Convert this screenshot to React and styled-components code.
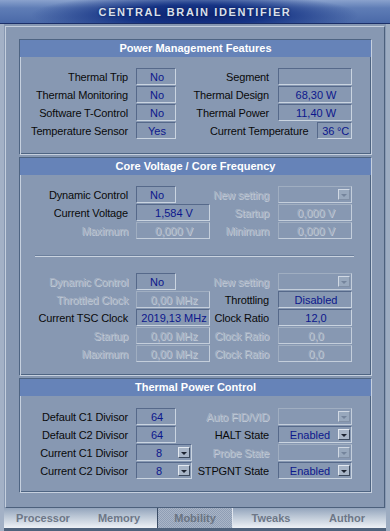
import React from "react";
import styled, { createGlobalStyle } from "styled-components";

const GlobalStyle = createGlobalStyle`
  html, body { margin: 0; padding: 0; background: #8798b2; }
  body { font-family: "Liberation Sans", Arial, sans-serif; }
  * { box-sizing: border-box; }
`;

const Window = styled.div`
  width: 390px;
  height: 531px;
  display: flex;
  flex-direction: column;
  background: #8798b2;
  overflow: hidden;
`;

const TitleBar = styled.div`
  height: 24px;
  flex: none;
  display: flex;
  align-items: center;
  justify-content: center;
  background:
    radial-gradient(ellipse 42% 95% at 50% 65%, #0c2270 0%, #163485 45%, rgba(40, 70, 150, 0) 100%),
    linear-gradient(to bottom, #8aa2cd 0%, #5f7db6 35%, #4a69a8 100%);
  border-bottom: 1px solid #1b2f68;
`;

const TitleText = styled.span`
  color: #d9e0ec;
  font-size: 11px;
  font-weight: 700;
  letter-spacing: 1.6px;
  text-shadow: 0 0 2px #0a1850;
  padding-top: 1px;
`;

const Body = styled.div`
  flex: 1;
  display: flex;
  flex-direction: column;
  border-left: 4px solid #a3b1c6;
  border-right: 4px solid #9dacc1;
`;

const FrameWrap = styled.div`
  padding: 2px 1px 0 1px;
`;

const Frame = styled.div`
  border: 1px solid;
  border-color: #c5cfdd #4c607c #4c607c #c5cfdd;
  padding: 12px 12px 14px 13px;
  display: flex;
  flex-direction: column;
  gap: 2px;
`;

const Section = styled.section`
  border: 1px solid;
  border-color: #4e6482 #c6d0de #c6d0de #4e6482;
  box-shadow: inset 1px 1px 0 #c6d0de, inset -1px -1px 0 #4e6482;
`;

const SectionHeader = styled.div`
  height: 17px;
  line-height: 17px;
  background: #6683b8;
  color: #ffffff;
  font-size: 11px;
  font-weight: 700;
  text-align: center;
`;

const SectionBody = styled.div`
  padding: ${(p) => p.$pt}px 0 ${(p) => p.$pb}px;
`;

const Grid = styled.div`
  display: grid;
  grid-template-columns: 116px 74px 68px 74px;
  grid-auto-rows: 17px;
  row-gap: 1px;
`;

const Label = styled.div`
  display: flex;
  justify-content: flex-end;
  align-items: center;
  padding-right: ${(p) => p.$pr}px;
  white-space: nowrap;
  font-size: 11px;
  letter-spacing: -0.15px;
  color: ${(p) => (p.$dis ? "#a6b2c3" : "#0a0a0a")};
  text-shadow: ${(p) => (p.$dis ? "1px 1px 0 #c2cbd8" : "none")};
`;

const Pair = styled.div`
  grid-column: 3 / 5;
  display: flex;
  justify-content: flex-end;
  align-items: center;
  gap: 9px;
  white-space: nowrap;
  font-size: 11px;
  letter-spacing: -0.15px;
  color: #0a0a0a;
`;

const Box = styled.div`
  height: 17px;
  width: ${(p) => p.$w}px;
  border: 1px solid;
  border-color: ${(p) =>
    p.$dis ? "#a0aec1 #c4cedb #c4cedb #a0aec1" : "#56698a #cad4e0 #cad4e0 #56698a"};
  display: flex;
  align-items: center;
  justify-content: center;
  padding-left: 2px;
  font-size: 11px;
  white-space: nowrap;
  color: ${(p) => (p.$dis ? "#a6b2c3" : "#0c178c")};
  text-shadow: ${(p) => (p.$dis ? "1px 1px 0 #c2cbd8" : "none")};
`;

const Select = styled(Box)`
  justify-content: space-between;
  padding-left: 0;
`;

const SelectValue = styled.span`
  flex: 1;
  text-align: center;
  padding-left: 3px;
`;

const ArrowBtn = styled.span`
  width: 12px;
  height: 11px;
  margin-right: 1px;
  border: 1px solid;
  border-color: ${(p) =>
    p.$dis ? "#d0d8e3 #8190a6 #8190a6 #d0d8e3" : "#e2e8f0 #3c4a5e #3c4a5e #e2e8f0"};
  background: ${(p) => (p.$dis ? "#98a8bd" : "#a8b5c7")};
  display: flex;
  align-items: center;
  justify-content: center;
  &::after {
    content: "";
    border-left: 3px solid transparent;
    border-right: 3px solid transparent;
    border-top: 3px solid ${(p) => (p.$dis ? "#74849c" : "#1b2230")};
    margin-top: 1px;
  }
`;

const Separator = styled.div`
  margin: 16px 17px 16px 15px;
  border-top: 1px solid #6c809d;
  border-bottom: 1px solid #cad3df;
`;

const TabBar = styled.nav`
  height: 23px;
  display: flex;
  padding-left: 1px;
  background: linear-gradient(to bottom, #93a4bc 0%, #b9c5d4 40%, #eef1f6 100%);
  border-bottom: 3px solid #4f627c;
`;

const Tab = styled.div`
  width: 76px;
  display: flex;
  align-items: center;
  justify-content: center;
  font-size: 11px;
  font-weight: 700;
  color: #6d7787;
  padding-bottom: 1px;
  ${(p) =>
    p.$active &&
    `
    background: repeating-conic-gradient(#a9b5c7 0% 25%, #8f9eb5 0% 50%) 0 0 / 2px 2px;
    border-left: 1px solid #3a4c66;
    border-right: 1px solid #dfe5ee;
    color: #6a7482;
  `}
`;

const Dropdown = ({ w, value, dis }) => (
  <Select $w={w} $dis={dis}>
    <SelectValue>{value}</SelectValue>
    <ArrowBtn $dis={dis} />
  </Select>
);

export default function App() {
  return (
    <>
      <GlobalStyle />
      <Window>
        <TitleBar>
          <TitleText>CENTRAL BRAIN IDENTIFIER</TitleText>
        </TitleBar>
        <Body>
          <FrameWrap>
            <Frame>
              <Section>
                <SectionHeader>Power Management Features</SectionHeader>
                <SectionBody $pt={11} $pb={15}>
                  <Grid>
                    <Label $pr={8}>Thermal Trip</Label>
                    <Box $w={40}>No</Box>
                    <Label $pr={9}>Segment</Label>
                    <Box $w={74}></Box>

                    <Label $pr={8}>Thermal Monitoring</Label>
                    <Box $w={40}>No</Box>
                    <Label $pr={9}>Thermal Design</Label>
                    <Box $w={74}>68,30 W</Box>

                    <Label $pr={8}>Software T-Control</Label>
                    <Box $w={40}>No</Box>
                    <Label $pr={9}>Thermal Power</Label>
                    <Box $w={74}>11,40 W</Box>

                    <Label $pr={8}>Temperature Sensor</Label>
                    <Box $w={40}>Yes</Box>
                    <Pair>
                      Current Temperature
                      <Box $w={39}>36 °C</Box>
                    </Pair>
                  </Grid>
                </SectionBody>
              </Section>

              <Section>
                <SectionHeader>Core Voltage / Core Frequency</SectionHeader>
                <SectionBody $pt={11} $pb={13}>
                  <Grid>
                    <Label $pr={8}>Dynamic Control</Label>
                    <Box $w={40}>No</Box>
                    <Label $pr={9} $dis>New setting</Label>
                    <Dropdown w={74} dis value="" />

                    <Label $pr={8}>Current Voltage</Label>
                    <Box $w={74}>1,584 V</Box>
                    <Label $pr={9} $dis>Startup</Label>
                    <Box $w={74} $dis>0,000 V</Box>

                    <Label $pr={8} $dis>Maximum</Label>
                    <Box $w={74} $dis>0,000 V</Box>
                    <Label $pr={9} $dis>Minimum</Label>
                    <Box $w={74} $dis>0,000 V</Box>
                  </Grid>
                  <Separator />
                  <Grid>
                    <Label $pr={8} $dis>Dynamic Control</Label>
                    <Box $w={40}>No</Box>
                    <Label $pr={9} $dis>New setting</Label>
                    <Dropdown w={74} dis value="" />

                    <Label $pr={8} $dis>Throttled Clock</Label>
                    <Box $w={74} $dis>0,00 MHz</Box>
                    <Label $pr={9}>Throttling</Label>
                    <Box $w={74}>Disabled</Box>

                    <Label $pr={8}>Current TSC Clock</Label>
                    <Box $w={74}>2019,13 MHz</Box>
                    <Label $pr={9}>Clock Ratio</Label>
                    <Box $w={74}>12,0</Box>

                    <Label $pr={8} $dis>Startup</Label>
                    <Box $w={74} $dis>0,00 MHz</Box>
                    <Label $pr={9} $dis>Clock Ratio</Label>
                    <Box $w={74} $dis>0,0</Box>

                    <Label $pr={8} $dis>Maximum</Label>
                    <Box $w={74} $dis>0,00 MHz</Box>
                    <Label $pr={9} $dis>Clock Ratio</Label>
                    <Box $w={74} $dis>0,0</Box>
                  </Grid>
                </SectionBody>
              </Section>

              <Section>
                <SectionHeader>Thermal Power Control</SectionHeader>
                <SectionBody $pt={12} $pb={13}>
                  <Grid>
                    <Label $pr={8}>Default C1 Divisor</Label>
                    <Box $w={40}>64</Box>
                    <Label $pr={9} $dis>Auto FID/VID</Label>
                    <Dropdown w={74} dis value="" />

                    <Label $pr={8}>Default C2 Divisor</Label>
                    <Box $w={40}>64</Box>
                    <Label $pr={9}>HALT State</Label>
                    <Dropdown w={74} value="Enabled" />

                    <Label $pr={8}>Current C1 Divisor</Label>
                    <Dropdown w={56} value="8" />
                    <Label $pr={9} $dis>Probe State</Label>
                    <Dropdown w={74} dis value="" />

                    <Label $pr={8}>Current C2 Divisor</Label>
                    <Dropdown w={56} value="8" />
                    <Label $pr={9}>STPGNT State</Label>
                    <Dropdown w={74} value="Enabled" />
                  </Grid>
                </SectionBody>
              </Section>
            </Frame>
          </FrameWrap>
          <TabBar>
            <Tab>Processor</Tab>
            <Tab>Memory</Tab>
            <Tab $active>Mobility</Tab>
            <Tab>Tweaks</Tab>
            <Tab>Author</Tab>
          </TabBar>
        </Body>
      </Window>
    </>
  );
}
